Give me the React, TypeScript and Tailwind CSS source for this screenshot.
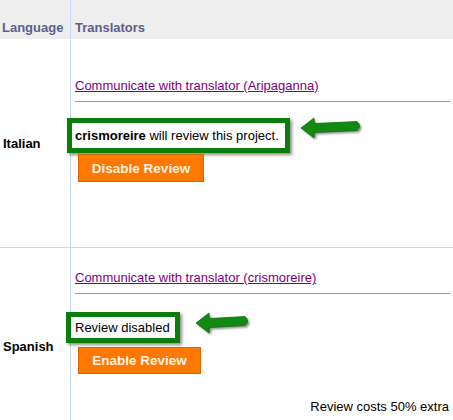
import React from "react";

function Arrow({ len }: { len: number }) {
  // len: horizontal length of the arrow from tip to shaft end
  const w = len + 8;
  const tail = len - 2;
  return (
    <svg width={w} height={30} viewBox={`0 0 ${w} 30`} className="block">
      <defs>
        <filter id={`sh${len}`} x="-20%" y="-30%" width="140%" height="160%">
          <feGaussianBlur stdDeviation="1.2" />
        </filter>
      </defs>
      <path
        d={`M2 14 L15 4 L15.5 9.5 L${tail} 7.5 Q${tail + 5} 12 ${tail} 16.5 L15.5 18.5 L15 24 Z`}
        fill="#333"
        opacity="0.55"
        transform="translate(2 2)"
        filter={`url(#sh${len})`}
      />
      <path
        d={`M2 14 L15 4 L15.5 9.5 L${tail} 7.5 Q${tail + 5} 12 ${tail} 16.5 L15.5 18.5 L15 24 Z`}
        fill="#128a12"
        stroke="#0c6f0c"
        strokeWidth="0.8"
        strokeLinejoin="round"
      />
    </svg>
  );
}

export default function App() {
  return (
    <div
      className="w-[453px] h-[420px] overflow-hidden bg-white text-black text-[13px] leading-[15px]"
      style={{ fontFamily: '"Liberation Sans", Arial, sans-serif' }}
    >
      {/* Header */}
      <div className="flex h-[39px] bg-[#eeeeee] font-bold text-[#5e5e8e]">
        <div className="w-[71px] border-r border-[#c3d9ff] pl-[2px] pt-[20px]">Language</div>
        <div className="flex-1 pl-[4px] pt-[20px]">Translators</div>
      </div>

      {/* Italian row */}
      <div className="flex h-[209px] border-b border-[#c3d9ff]">
        <div className="w-[71px] border-r border-[#c3d9ff] pl-[3px] flex items-center font-bold">
          Italian
        </div>
        <div className="flex-1 pl-[4px] pt-[39px] flex flex-col">
          <a href="#" className="text-[#800080] underline self-start">
            Communicate with translator (Aripaganna)
          </a>
          <div className="mt-[8px] mr-[3px] h-px bg-[#9a9a9a]" />
          <div className="mt-[16px] flex items-start">
            <div className="ml-[-8px] border-[5px] border-[#0b7d0b] bg-white pl-[3px] pr-[6px] py-[5px] shadow-[2px_2px_3px_rgba(0,0,0,0.45)]">
              <span className="font-bold">crismoreire</span> will review this project.
            </div>
            <div className="ml-[9px] mt-[-4px]">
              <Arrow len={60} />
            </div>
          </div>
          <button className="mt-[1px] ml-[3px] h-[28px] w-[126px] bg-[#ff7800] border border-[#d96700] text-[#fff2e6] font-bold text-[13.5px] self-start">
            Disable Review
          </button>
        </div>
      </div>

      {/* Spanish row */}
      <div className="flex h-[196px]">
        <div className="w-[71px] border-r border-[#c3d9ff] pl-[3px] flex items-center font-bold">
          Spanish
        </div>
        <div className="flex-1 pl-[4px] pt-[22px] flex flex-col">
          <a href="#" className="text-[#800080] underline self-start">
            Communicate with translator (crismoreire)
          </a>
          <div className="mt-[8px] mr-[3px] h-px bg-[#9a9a9a]" />
          <div className="mt-[18px] flex items-start">
            <div className="ml-[-9px] border-[5px] border-[#0b7d0b] bg-white pl-[4px] pr-[5px] py-[3px] shadow-[2px_2px_3px_rgba(0,0,0,0.45)]">
              Review disabled
            </div>
            <div className="ml-[14px] mt-[-3px]">
              <Arrow len={53} />
            </div>
          </div>
          <button className="mt-[4px] ml-[3px] h-[27px] w-[123px] bg-[#ff7800] border border-[#d96700] text-[#fff2e6] font-bold text-[13.5px] self-start">
            Enable Review
          </button>
          <div className="mt-[25px] mr-[4px] text-right">Review costs 50% extra</div>
        </div>
      </div>
    </div>
  );
}
